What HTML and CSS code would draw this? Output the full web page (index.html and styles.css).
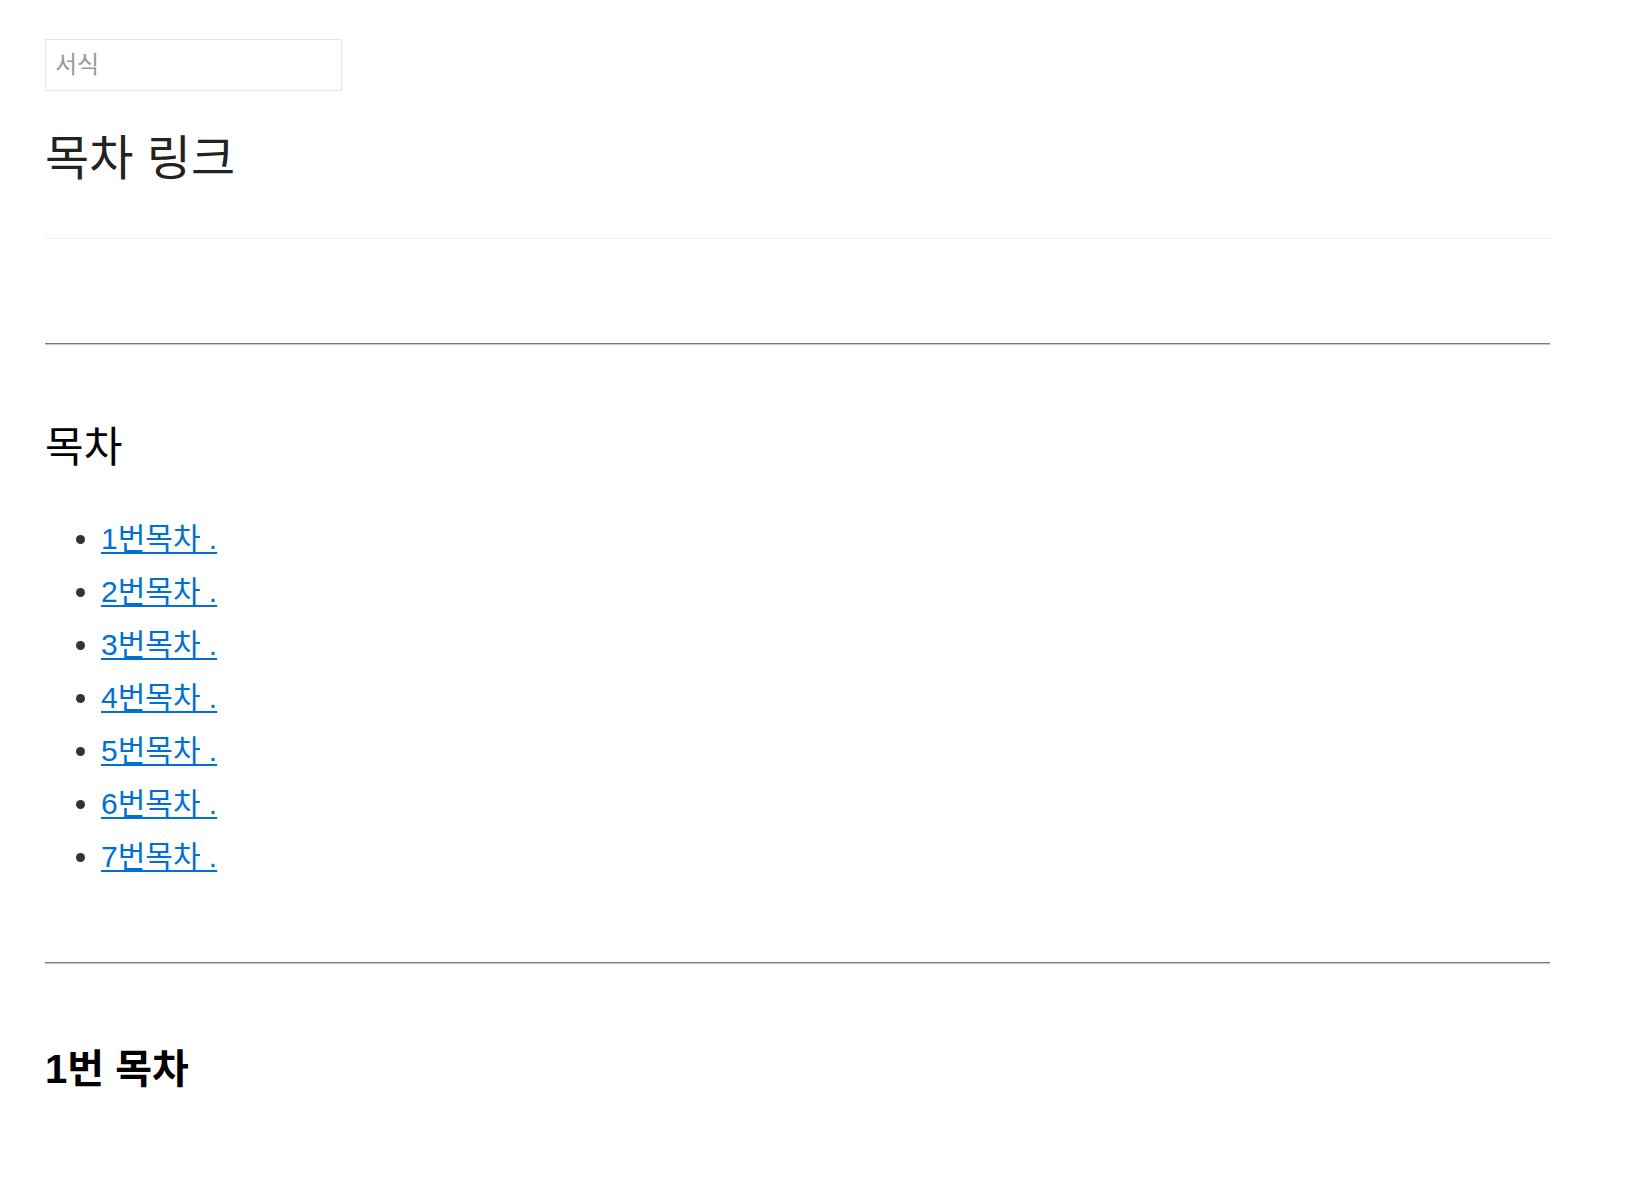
FILE: index.html
```html
<!DOCTYPE html>
<html lang="ko">
<head>
<meta charset="utf-8">
<title>목차 링크</title>
<link rel="stylesheet" href="styles.css">
</head>
<body>
<div class="page">
  <input class="search" type="text" placeholder="서식">
  <h1 class="title">목차 링크</h1>
  <div class="title-rule"></div>
  <hr class="rule rule-top">
  <h2 class="toc-title">목차</h2>
  <ul class="toc">
    <li><a href="#s1">1번목차 .</a></li>
    <li><a href="#s2">2번목차 .</a></li>
    <li><a href="#s3">3번목차 .</a></li>
    <li><a href="#s4">4번목차 .</a></li>
    <li><a href="#s5">5번목차 .</a></li>
    <li><a href="#s6">6번목차 .</a></li>
    <li><a href="#s7">7번목차 .</a></li>
  </ul>
  <hr class="rule rule-bottom">
  <h3 class="section-title" id="s1">1번 목차</h3>
</div>
</body>
</html>
```
FILE: styles.css
```css
html, body {
  margin: 0;
  padding: 0;
  background: #fff;
}
body {
  font-family: "Liberation Sans", "Noto Sans CJK KR", sans-serif;
  color: #333;
}
.page {
  margin-left: 45px;
  width: 1505px;
  padding-top: 39px;
}
.search {
  display: block;
  box-sizing: border-box;
  width: 297px;
  height: 52px;
  margin: 0;
  padding: 0 9px;
  border: 1px solid #e5e5e5;
  font-family: "Liberation Sans", "Noto Sans CJK KR", sans-serif;
  font-size: 24px;
  color: #333;
  outline: none;
}
.search::placeholder {
  color: #999;
}
.title {
  margin: 29px 0 0;
  font-family: "Noto Sans CJK KR", sans-serif;
  font-size: 48px;
  font-weight: 400;
  line-height: 68px;
  color: #222;
}
.title-rule {
  margin-top: 50px;
  height: 1px;
  background: #eeeeee;
}
.rule {
  margin: 0;
  border: 0;
  border-top: 1px solid #7a7a7a;
  border-bottom: 1px solid #c9c9c9;
  height: 0;
}
.rule-top {
  margin-top: 104px;
}
.toc-title {
  margin: 71px 0 0;
  font-family: "Noto Sans CJK KR", sans-serif;
  font-size: 42px;
  font-weight: 400;
  line-height: 56px;
  color: #000;
}
.toc {
  margin: 40px 0 0;
  padding-left: 56px;
  list-style: disc;
  font-size: 30px;
  color: #333;
}
.toc li {
  line-height: 53px;
}
.toc a {
  color: #0070d2;
  text-decoration: underline;
  text-underline-offset: 3px;
  text-decoration-thickness: 2px;
}
.rule-bottom {
  margin-top: 79px;
}
.section-title {
  margin: 80px 0 0;
  font-size: 40px;
  font-weight: 700;
  line-height: 50px;
  color: #000;
}
```
